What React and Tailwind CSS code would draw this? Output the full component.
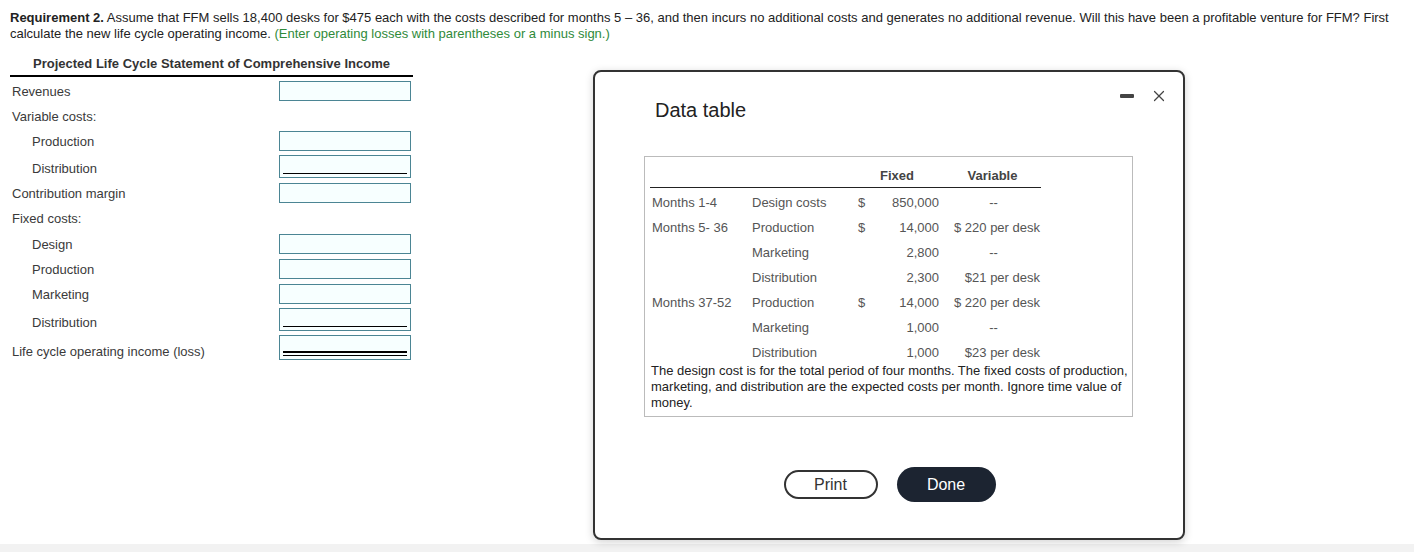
import { X } from 'lucide-react'

const font = { fontFamily: '"Liberation Sans", Arial, sans-serif' }

const rows = [
  { label: 'Revenues', h: 'h-[25px]', box: 'plain' },
  { label: 'Variable costs:', h: 'h-[25px]' },
  { label: 'Production', indent: true, h: 'h-[25px]', box: 'plain' },
  { label: 'Distribution', indent: true, h: 'h-[27px]', box: 'single', shift: 'pt-[5px]' },
  { label: 'Contribution margin', h: 'h-[25px]', box: 'plain', shift: 'pt-[2px]' },
  { label: 'Fixed costs:', h: 'h-[26px]', shift: 'pt-[1px]' },
  { label: 'Design', indent: true, h: 'h-[25px]', box: 'plain', shift: 'pt-[1px]' },
  { label: 'Production', indent: true, h: 'h-[25px]', box: 'plain', shift: 'pt-[1px]' },
  { label: 'Marketing', indent: true, h: 'h-[25px]', box: 'plain', shift: 'pt-[1px]' },
  { label: 'Distribution', indent: true, h: 'h-[27px]', box: 'single', shift: 'pt-[6px]' },
  { label: 'Life cycle operating income (loss)', h: 'h-[29px]', box: 'double', shift: 'pt-[8px]' },
]

function Box({ type }) {
  if (type === 'single') {
    return (
      <div className="flex h-[23px] w-[132px] items-end border border-[#4b8594] bg-[#f7ffff] px-[3px] pb-[3px]">
        <div className="h-[1.5px] w-full bg-black" />
      </div>
    )
  }
  if (type === 'double') {
    return (
      <div className="flex h-[25px] w-[132px] flex-col justify-end gap-[2px] border border-[#4b8594] bg-[#f7ffff] px-[3px] pb-[3px]">
        <div className="h-[1.5px] w-full bg-black" />
        <div className="h-[1.5px] w-full bg-black" />
      </div>
    )
  }
  return <div className="h-[20px] w-[132px] border border-[#4b8594] bg-[#f7ffff]" />
}

function Statement() {
  return (
    <div className="mt-[14px] w-[403px]">
      <div className="border-b-2 border-black pb-[3px] text-center text-[13px] font-bold leading-[16px] text-[#333]">
        Projected Life Cycle Statement of Comprehensive Income
      </div>
      <div className="pt-[1px]">
        {rows.map((r, i) => (
          <div key={i} className={`flex items-center ${r.h}`}>
            <div
              className={`w-[269px] pt-[2px] text-[13px] leading-[16px] text-[#3a3a3a] ${r.indent ? 'pl-[22px]' : 'pl-[2px]'} ${r.shift || ''}`}
            >
              {r.label}
            </div>
            {r.box && <Box type={r.box} />}
          </div>
        ))}
      </div>
    </div>
  )
}

const data = [
  ['Months 1-4', 'Design costs', '$', '850,000', '--'],
  ['Months 5- 36', 'Production', '$', '14,000', '$ 220 per desk'],
  ['', 'Marketing', '', '2,800', '--'],
  ['', 'Distribution', '', '2,300', '$21 per desk'],
  ['Months 37-52', 'Production', '$', '14,000', '$ 220 per desk'],
  ['', 'Marketing', '', '1,000', '--'],
  ['', 'Distribution', '', '1,000', '$23 per desk'],
]

function DataModal() {
  return (
    <div className="absolute left-[593px] top-[70px] flex h-[470px] w-[592px] flex-col rounded-lg border-2 border-[#333] bg-white shadow-[0_2px_8px_rgba(0,0,0,0.18)]">
      <div className="absolute right-[49px] top-[22px] h-[4px] w-[14px] rounded-[1px] bg-[#444]" />
      <X className="absolute right-[15px] top-[15px] h-[18px] w-[18px] text-[#444]" strokeWidth={1.6} />
      <div className="pl-[60px] pt-[26px] text-[20px] leading-[24px] text-[#222]">Data table</div>
      <div className="ml-[49px] mt-[34px] w-[489px] border border-[#bbb] px-[5px] pb-[5px]">
        <div className="flex w-[391px] border-b border-[#222] pb-[3px] pt-[11px] text-[13px] font-bold leading-[16px] text-[#444]">
          <div className="w-[200px]" />
          <div className="w-[94px] text-center">Fixed</div>
          <div className="w-[97px] text-center">Variable</div>
        </div>
        <div className="pt-px">
          {data.map((d, i) => (
            <div key={i} className="flex h-[25px] items-center pt-[2px] text-[13px] text-[#555]">
              <div className="w-[100px] pl-[2px]">{d[0]}</div>
              <div className="w-[100px] pl-[2px]">{d[1]}</div>
              <div className="w-[20px] pl-[8px]">{d[2]}</div>
              <div className="w-[74px] pr-[5px] text-right">{d[3]}</div>
              <div className={`w-[97px] ${d[4] === '--' ? 'pl-[2px] text-center' : 'pr-[1px] text-right'}`}>{d[4]}</div>
            </div>
          ))}
        </div>
        <div className="-mt-[1px] pl-px text-[13px] leading-[16px] text-[#222] whitespace-nowrap">
          The design cost is for the total period of four months. The fixed costs of production,
          <br />
          marketing, and distribution are the expected costs per month. Ignore time value of
          <br />
          money.
        </div>
      </div>
      <div className="mt-[50px] flex items-center justify-center gap-[19px] pl-[1px]">
        <button className="h-[29px] w-[94px] rounded-full border-2 border-[#333] bg-white text-[16px] text-[#333]">
          Print
        </button>
        <button className="h-[35px] w-[99px] rounded-full bg-[#1c2431] text-[16px] text-white">Done</button>
      </div>
    </div>
  )
}

export default function App() {
  return (
    <div className="relative flex h-[552px] w-[1414px] flex-col bg-white" style={font}>
      <div className="flex-1 pl-[10px] pt-[10px]">
        <div className="whitespace-nowrap text-[13px] leading-[16px] text-[#222]">
          <span className="font-bold">Requirement 2.</span> Assume that FFM sells 18,400 desks for $475 each with the
          costs described for months 5 – 36, and then incurs no additional costs and generates no additional revenue.
          Will this have been a profitable venture for FFM? First
          <br />
          calculate the new life cycle operating income.{' '}
          <span className="text-[#2f8a3a]">(Enter operating losses with parentheses or a minus sign.)</span>
        </div>
        <Statement />
      </div>
      <div className="h-[8px] bg-[#f2f2f2]" />
      <DataModal />
    </div>
  )
}
